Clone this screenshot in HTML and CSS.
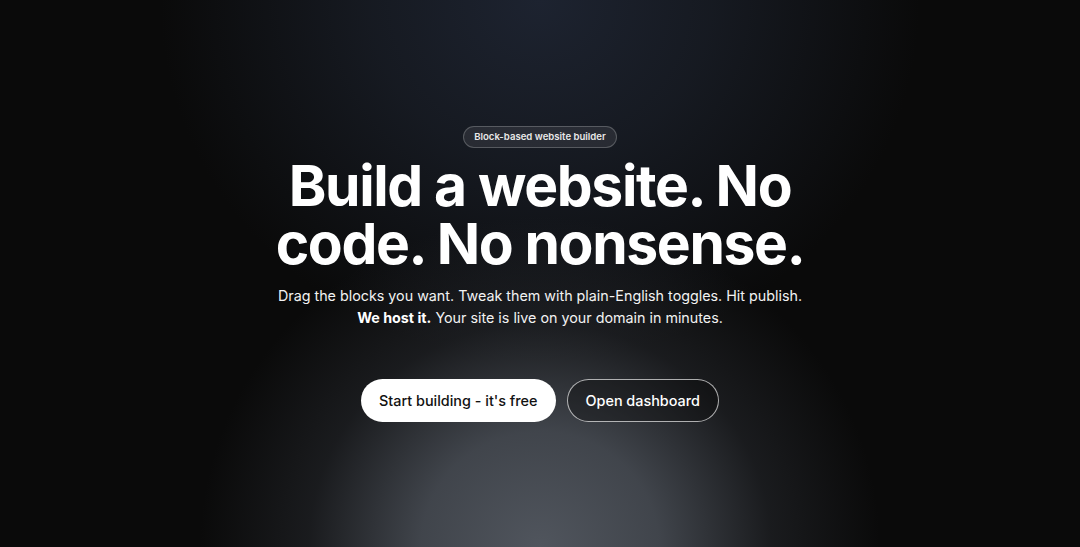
FILE: index.html
```html
<!DOCTYPE html>
<html lang="en">
<head>
<meta charset="utf-8">
<title>Block-based website builder</title>
<link rel="stylesheet" href="styles.css">
</head>
<body>
<main class="hero">
  <span class="badge">Block-based website builder</span>
  <h1 class="title">Build a website. No<br>code. No nonsense.</h1>
  <p class="lead">Drag the blocks you want. Tweak them with plain-English toggles. Hit publish.<br><strong>We host it.</strong> Your site is live on your domain in minutes.</p>
  <div class="actions">
    <a class="btn btn-primary" href="#">Start building - it's free</a>
    <a class="btn btn-outline" href="#">Open dashboard</a>
  </div>
</main>
</body>
</html>
```
FILE: styles.css
```css
html, body {
  margin: 0;
  padding: 0;
  height: 100%;
}
body {
  font-family: Inter, "Noto Sans", sans-serif;
  color: #fff;
  background-color: #0a0a0a;
  background-image:
    radial-gradient(ellipse 340px 330px at 50% 100%, rgba(80,85,93,1) 0%, rgba(74,79,87,0.85) 35%, rgba(45,48,54,0.45) 68%, rgba(10,10,10,0) 100%),
    radial-gradient(ellipse 380px 360px at 50% 0%, rgba(29,35,48,1) 0%, rgba(26,31,41,0.75) 45%, rgba(10,10,10,0) 100%);
  overflow: hidden;
}
.hero {
  height: 547px;
  box-sizing: border-box;
  padding-top: 126px;
  display: flex;
  flex-direction: column;
  align-items: center;
  text-align: center;
}
.badge {
  display: inline-block;
  font-size: 9.6px;
  font-weight: 600;
  line-height: 20px;
  padding: 0 10px;
  border-radius: 999px;
  border: 1px solid rgba(255,255,255,0.22);
  background: rgba(255,255,255,0.08);
  color: #e8e8e8;
}
.title {
  margin: 9px 0 0;
  font-size: 57px;
  font-weight: 700;
  line-height: 58px;
  letter-spacing: -0.024em;
}
.lead {
  margin: 12px 0 0;
  font-size: 14.3px;
  line-height: 22px;
  color: #f2f2f2;
}
.lead strong {
  font-weight: 700;
  color: #fff;
}
.actions {
  margin-top: 50px;
  display: flex;
  gap: 11px;
}
.btn {
  display: inline-flex;
  align-items: center;
  justify-content: center;
  height: 43px;
  box-sizing: border-box;
  padding: 0 18px;
  border-radius: 999px;
  font-size: 14.4px;
  font-weight: 500;
  text-decoration: none;
}
.btn-primary {
  background: #fff;
  color: #111;
}
.btn-outline {
  border: 1px solid rgba(255,255,255,0.65);
  color: #fff;
  background: rgba(10,10,10,0.35);
}
```
